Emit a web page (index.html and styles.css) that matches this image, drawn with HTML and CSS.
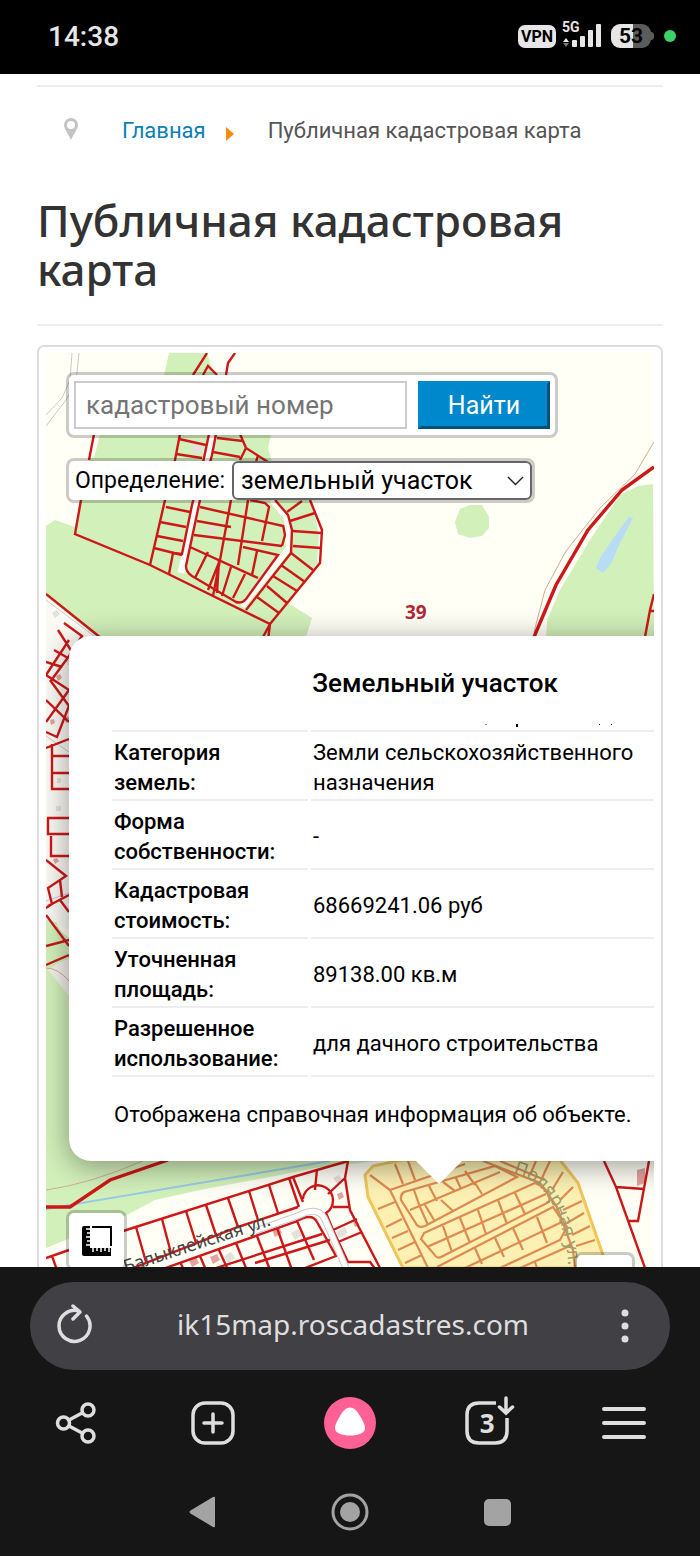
FILE: index.html
```
<!DOCTYPE html>
<html lang="ru">
<head>
    <meta charset="UTF-8">
    <meta name="viewport" content="width=device-width, initial-scale=1.0">
    <title>Публичная кадастровая карта</title>
    <link rel="stylesheet" href="styles.css">
</head>
<body>
    <header class="status">
        <span class="clock">14:38</span>
        <div class="status-icons">
            <span class="vpn">VPN</span>
            <div class="signal">
                <span class="net">5G</span>
                <svg width="40" height="24" viewBox="0 0 40 24" fill="#e6e6e6">
                    <path d="M1 18l3-4 3 4z"/>
                    <path d="M1 19h6l-3 4z" fill="#777"/>
                    <rect x="10" y="16" width="5" height="7" rx="1"/>
                    <rect x="18" y="12" width="5" height="11" rx="1"/>
                    <rect x="26" y="6" width="5" height="17" rx="1"/>
                    <rect x="34" y="0" width="5" height="23" rx="1"/>
                </svg>
            </div>
            <span class="battery">53</span>
            <span class="dot"></span>
        </div>
    </header>

    <main class="page">
        <nav class="breadcrumb">
            <svg class="pin" width="14" height="22" viewBox="0 0 14 22"><path fill="#c4c4c4" fill-rule="evenodd" d="M7 0a7 7 0 0 1 7 7c0 4-4 8-7 15C4 15 0 11 0 7a7 7 0 0 1 7-7zm0 3a4 4 0 1 0 0 8 4 4 0 0 0 0-8z"/></svg>
            <a href="#">Главная</a>
            <svg class="arrow" width="8" height="14" viewBox="0 0 8 14"><path fill="#f98b0c" d="M0 0l8 7-8 7z"/></svg>
            <span>Публичная кадастровая карта</span>
        </nav>
        <h1>Публичная кадастровая карта</h1>

        <div class="map-panel">
            <div class="map">
                <svg class="map-tiles" viewBox="46 353 608 914" preserveAspectRatio="xMinYMin slice">
                    <rect x="46" y="353" width="608" height="914" fill="#fffff6"/>
                    <!-- леса -->
                    <g fill="#d2f0ba">
                        <path d="M169 353H207L213 372 252 400 271 434 268 448 272 462 262 470 310 500 322 530 320 563 288 603 312 618 305 640H100L46 596V526L55 520 75 527 96 434 163 380z"/>
                        <path d="M653 484L638 486 620 495 590 540 560 590 547 620 546 640H654z"/>
                        <path d="M460 509L470 505H482L489 517V528L482 536 470 538 458 534 455 522z"/>
                        <path d="M46 920L72 940V1100H375V1161L315 1168 270 1177 200 1190 155 1200 125 1216 46 1248z"/>
                    </g>
                    <path d="M629 517l4 1-14 27-7 17-9 11-7-5 4-10 15-22z" fill="#b8dcf5"/>
                    <!-- дороги -->
                    <g fill="none" stroke="#fffdf8">
                        <path stroke-width="7" d="M213 430L208 460 192 525 181 573"/>
                        <path stroke-width="6" d="M272 500L287 518 289 548 242 606"/>
                        <path stroke-width="9" d="M46 606L100 648"/>
                        <path stroke-width="4" d="M311 498L318 520 321 535 319 562M98 434L92 458"/>
                    </g>
                    <path d="M46 600L90 640 72 660V930L46 920z" fill="#fbf9f3"/>
                    <path d="M46 920L56 922 69 946V965L46 975z" fill="#d2f0ba"/>
                    <path d="M48 970L60 962 72 958V1000z" fill="#f3efe9"/>
                    <g fill="none" stroke="#c9c9cf" stroke-width="1">
                        <path d="M72 353L70 380 62 398 46 415M79 353L76 382 66 400 46 426M46 600L94 636M46 736L69 752M46 901L69 893"/>
                    </g>
                    <g fill="none" stroke="#d0ac94" stroke-width="1">
                        <path d="M534 632L545 590 566 551 600 508 635 474 654 442M46 1190Q90 1184 145 1160M46 968Q58 968 69 981"/>
                    </g>
                    <path d="M46 1209L330 1161" stroke="#98cbe6" stroke-width="2" fill="none"/>
                    <g fill="#e4e0da">
                        <path d="M190 447l8-3 6 4-2 5-9 0zM206 528l9-2 2 5-8 3zM52 613l5-3 3 4-5 4zM67 660h5v5h-5zM56 806h5v5h-5zM57 778h4v5h-4zM333 1178l6-3 4 6-5 4zM336 1232l9-5 3 6-9 5zM291 1233l7-4 4 6-7 5zM224 1256l7-4 4 6-7 5z"/>
                    </g>
                    <g fill="#dc8c8c" opacity=".8">
                        <path d="M337 1194l5-2 2 5-5 3zM272 1230l7-3 3 6-7 4zM210 1257l7-3 3 6-7 4zM189 1260l7-3 3 6-7 4zM637 1170l8-2v15l-8 3zM56 676l4-2 2 4-4 3zM64 718l4-2 2 4-4 3zM353 1222l4-2 2 5-4 2zM50 720l4-1 1 4-4 2zM53 859l4-1 2 3-4 3z"/>
                    </g>
                    <!-- границы участков -->
                    <g class="parcels">
                        <path d="M94 434L89 460M81 500L75 534 150 565 270 624 320 563 322 530 310 500M270 624L263 637M270 624L268 640"/>
                        <path d="M193 375L207 353M203 375L208 366 217 375M226 375L228 363 235 353"/>
                        <path d="M180 434L175 460 165 500 150 565M209 434L204 458 192 505 182 554 173 553 169 574"/>
                        <path d="M179 439L206 445M176 454L202 458M166 507L190 512M160 522L186 527M157 536L183 541M154 548L182 555"/>
                        <path d="M216 434L212 455 200 500 186 566Q186 572 192 576L236 602Q242 604 246 599L278 555 243 547"/>
                        <path d="M217 438L243 441M213 452L240 457M200 507L283 526M197 521L231 527M194 535L282 546M190 547L258 578"/>
                        <path d="M231 500L220 560 213 596M248 500L238 565M250 500L265 503 269 507 262 541M283 525L285 535 282 546M208 552L195 578M220 560L208 590M219 560L217 593M231 567L222 596M245 574L233 598M257 551L252 575"/>
                        <path d="M240 434L246 448 268 462M246 448L240 460M258 455L256 462M275 500L288 515 292 530 291 553 246 610"/>
                        <path d="M287 512L302 501M290 521L315 513M293 531L321 533M293 546L321 548M291 553L313 570M281 565L305 582M267 586L287 603M273 576L297 591M257 597L279 613"/>
                        <path d="M46 594L101 638M69 640L46 675M72 652L50 682M64 623L82 636 72 652 58 630M54 650L68 658M46 662L62 667M46 675L69 690 46 722M50 680L69 706 57 737 46 732M46 700L69 722M46 748L69 739M52 744V789H69M52 756H69M52 773H69M47 818H69M48 818V834H69M51 836V856H69M46 860L66 876 48 888 52 904 46 908M60 880L62 897M48 906L69 895M46 915L69 946M60 900L69 912M46 946L69 940M46 965L69 955"/>
                        <path class="wide" d="M534 637L556 585 588 530 622 490 654 467M46 1207H70L110 1180 168 1160"/>
                        <path d="M645 637L650 610 654 594M649 611H654"/>
                        <!-- нижний квартал -->
                        <path d="M46 1258L69 1250M52 1256L57 1270M120 1232L293 1177 348 1161M128 1270L238 1227 298 1207M293 1177L303 1202M289 1178L299 1207"/>
                        <path d="M136 1227L146 1262M162 1219L171 1253M186 1211L196 1243M206 1205L216 1235M228 1198L238 1227M249 1191L258 1220M269 1185L278 1213"/>
                        <path d="M303 1199A15 15 0 1 1 326 1213L333 1230 348 1262H370L376 1270M317 1169L315 1190M345 1178L328 1194M348 1161L345 1178 350 1210 381 1270M333 1207H350M333 1230L357 1219M338 1242L362 1232"/>
                        <path d="M160 1270L295 1222Q312 1212 317 1222L336 1256 300 1270M210 1270L322 1234M180 1262L184 1270M200 1256L206 1270M219 1250L228 1270M236 1243L246 1268M257 1236L270 1270M277 1228L292 1270M297 1221L314 1260M255 1263L330 1240"/>
                        <path d="M604 1161L616 1187 645 1268M649 1161L638 1221H629M616 1187L644 1189"/>
                    </g>
                    <g fill="none">
                        <path d="M255 1231L300 1215Q320 1205 326 1222L346 1268" stroke="#c9c9cf" stroke-width="7"/>
                        <path d="M255 1231L300 1215Q320 1205 326 1222L346 1268" stroke="#fff" stroke-width="5"/>
                    </g>
                    <!-- выделенный участок -->
                    <path d="M402 1160L373 1166 365 1175 368 1197 403 1268H606L603 1255 578 1183 560 1160z" fill="#fcf0b2" stroke="#f0c65c" stroke-width="3"/>
                    <g class="selected">
                        <path d="M370 1175L390 1190 428 1268M378 1209L395 1202M386 1227L402 1219M392 1238L408 1231M398 1250L415 1242M405 1263L422 1255M390 1190L465 1164M395 1164L403 1184M408 1161L415 1180"/>
                        <path d="M404 1192L495 1166 517 1177 425 1226Q418 1229 415 1222L401 1200Q400 1195 404 1192zM410 1210L500 1172M414 1190L420 1207 428 1225M429 1186L437 1201M441 1200L453 1211M443 1182L455 1191M456 1178L461 1189M475 1183L482 1194M465 1171L475 1185M425 1205L434 1220"/>
                        <path d="M424 1233L535 1183Q552 1190 549 1202L443 1256Q437 1260 434 1254L421 1239zM427 1247L546 1194M443 1226L452 1252M460 1218L470 1243M478 1210L486 1234M498 1200L507 1224M515 1193L525 1214"/>
                        <path d="M437 1267L553 1207 567 1227 560 1240 500 1268M465 1268L562 1222M475 1248L482 1264M495 1238L504 1257M513 1228L523 1250M537 1217L547 1243M520 1268L572 1245M535 1262L537 1268"/>
                        <path d="M483 1161L540 1183 557 1207 573 1250 575 1268M500 1161L545 1180M536 1161L530 1175M550 1161L541 1180M563 1172L552 1190M573 1187L560 1200M582 1201L563 1210M584 1213L567 1223M590 1226L572 1235M595 1240L576 1246"/>
                    </g>
                    <path id="balyk" d="M126 1273Q180 1255 272 1225" fill="none"/>
                    <path id="polar" d="M513 1173Q562 1184 569 1270" fill="none"/>
                    <text class="street"><textPath href="#balyk">Балыклейская ул.</textPath></text>
                    <text class="street street-green"><textPath href="#polar">Полярная ул.</textPath></text>
                    <text class="quarter" x="405" y="619">39</text>
                </svg>

                <div class="map-controls">
                    <form class="search">
                        <input type="text" placeholder="кадастровый номер" aria-label="кадастровый номер">
                        <button type="button">Найти</button>
                    </form>
                    <div class="kind">
                        <label for="kind">Определение:</label>
                        <div class="select-wrap">
                            <select id="kind">
                                <option>земельный участок</option>
                            </select>
                            <svg width="17" height="10" viewBox="0 0 17 10" fill="none" stroke="#222" stroke-width="1.4"><path d="M1 1l7.500 7.500L16 1"/></svg>
                        </div>
                    </div>
                </div>

                <div class="map-tools">
                    <button type="button" class="tool tool-measure" aria-label="Измерить">
                        <svg width="32" height="32" viewBox="0 0 32 32">
                            <path d="M3 1h6v22h21v8H3q-2 0-2-2V3q0-2 2-2z"/>
                            <path d="M11 2h19v19" fill="none" stroke="#000" stroke-width="2"/>
                            <path d="M9 4H5M9 8H6M9 12H5M9 16H6M9 20H5M12 23v4M16 23v3M20 23v4M24 23v3M28 23v4" stroke="#fff" stroke-width="1.500"/>
                        </svg>
                    </button>
                    <button type="button" class="tool" aria-label="Слои"></button>
                </div>

                <section class="popup">
                    <h2>Земельный участок</h2>
                    <table>
                        <tr class="cut">
                            <td></td>
                            <td><svg width="342" height="6" viewBox="311 724 342 6"><path d="M485 724h2l-1 1zM516 724h2v3h-2zM599 724h1v1h-1zM611 724h1v1h-1z"/></svg></td>
                        </tr>
                        <tr><th scope="row">Категория земель:</th><td>Земли сельскохозяйственного<br>назначения</td></tr>
                        <tr><th scope="row">Форма собственности:</th><td>-</td></tr>
                        <tr><th scope="row">Кадастровая стоимость:</th><td>68669241.06 руб</td></tr>
                        <tr><th scope="row">Уточненная площадь:</th><td>89138.00 кв.м</td></tr>
                        <tr><th scope="row">Разрешенное использование:</th><td>для дачного строительства</td></tr>
                    </table>
                    <p>Отображена справочная информация об объекте.</p>
                </section>
            </div>
        </div>
    </main>

    <footer class="browser">
        <div class="address">
            <button type="button" aria-label="Обновить">
                <svg width="40" height="44" viewBox="0 0 40 44" fill="none" stroke="#dedede" stroke-width="3.500" stroke-linecap="round" stroke-linejoin="round"><path d="M24 7A15.500 15.500 0 1 0 31.500 12M18 2l7 6-7 7"/></svg>
            </button>
            <span>ik15map.roscadastres.com</span>
            <button type="button" aria-label="Ещё">
                <svg width="40" height="44" viewBox="0 0 40 44" fill="#dedede"><circle cx="20" cy="9" r="3.500"/><circle cx="20" cy="22" r="3.500"/><circle cx="20" cy="35" r="3.500"/></svg>
            </button>
        </div>
        <div class="toolbar">
            <button type="button" aria-label="Поделиться">
                <svg width="56" height="56" viewBox="0 0 56 56" fill="none" stroke="#dedede" stroke-width="3.500"><circle cx="15.500" cy="28" r="6"/><circle cx="40" cy="15" r="6"/><circle cx="40" cy="41" r="6"/><path d="M21 25l14-7.500M21 31l14 7.500"/></svg>
            </button>
            <button type="button" aria-label="Новая вкладка">
                <svg width="56" height="56" viewBox="0 0 56 56" fill="none" stroke="#dedede" stroke-width="3.500" stroke-linecap="round"><rect x="8" y="8" width="40" height="40" rx="12"/><path d="M28 19v18M19 28h18"/></svg>
            </button>
            <button type="button" aria-label="Алиса">
                <svg width="56" height="56" viewBox="0 0 56 56"><circle cx="28" cy="28" r="26" fill="#ff6095"/><path fill="#fff" d="M28 12.500c4 0 7 3.500 10 8.500 3 5 5 9 5 12 0 5.500-7 7.500-15 7.500S13 38.500 13 33c0-3 2-7 5-12 3-5 6-8.500 10-8.500z"/></svg>
            </button>
            <button type="button" class="tabs" aria-label="Вкладки">
                <svg width="56" height="56" viewBox="0 0 56 56" fill="none" stroke="#dedede" stroke-width="3.500"><path d="M37 8H20Q8 8 8 20V36Q8 48 20 48H36Q48 48 48 36V23"/><path d="M47 3v14M40.500 12l6.500 6 6.500-6" stroke-linecap="round"/></svg>
                <span>3</span>
            </button>
            <button type="button" aria-label="Меню">
                <svg width="56" height="56" viewBox="0 0 56 56" stroke="#dedede" stroke-width="4" stroke-linecap="round"><path d="M8 14h40M8 28h40M8 42h40"/></svg>
            </button>
        </div>
        <div class="system-nav">
            <svg width="40" height="40" viewBox="0 0 40 40" fill="#a3a3a3"><path d="M7.500 18.500L30 5q2-1 2 1v28q0 2-2 1L7.500 21.500q-2-1.500 0-3z"/></svg>
            <svg width="40" height="40" viewBox="0 0 40 40" fill="#a3a3a3"><circle cx="20" cy="20" r="10"/><circle cx="20" cy="20" r="17" fill="none" stroke="#a3a3a3" stroke-width="3"/></svg>
            <svg width="40" height="40" viewBox="0 0 40 40" fill="#a3a3a3"><rect x="7" y="7" width="27" height="27" rx="5"/></svg>
        </div>
    </footer>
</body>
</html>
```
FILE: styles.css
```
* {
    box-sizing: border-box;
}
body {
    margin: 0;
    height: 100vh;
    display: flex;
    flex-direction: column;
    background: #fff;
    color: #000;
    font-family: Roboto, sans-serif;
    font-size: 22px;
    line-height: 30px;
}
button {
    padding: 0;
    border: none;
    background: none;
    font-family: inherit;
    cursor: pointer;
}
svg {
    display: block;
    flex: none;
}

/* статус-бар */
.status {
    display: flex;
    justify-content: space-between;
    align-items: center;
    height: 74px;
    padding: 0 24px 0 48px;
    background: #000;
    color: #e6e6e6;
}
.clock {
    font-size: 28px;
    font-weight: 500;
}
.status-icons {
    display: flex;
    align-items: center;
    gap: 6px;
    padding-bottom: 2px;
}
.vpn {
    width: 38px;
    border-radius: 7px;
    background: #e6e6e6;
    color: #000;
    font-size: 16px;
    font-weight: 700;
    line-height: 23px;
    text-align: center;
}
.signal {
    position: relative;
}
.net {
    position: absolute;
    left: 0;
    top: -4px;
    font-size: 14px;
    font-weight: 700;
    line-height: 14px;
}
.battery {
    position: relative;
    width: 40px;
    margin: 0 7px 0 3px;
    border-radius: 9px;
    background: linear-gradient(90deg, #e6e6e6 55%, #5c5c5c 55%);
    color: #000;
    font-size: 21px;
    font-weight: 700;
    line-height: 24px;
    text-align: center;
}
.battery::after {
    content: "";
    position: absolute;
    left: 100%;
    top: 8px;
    width: 3px;
    height: 8px;
    border-radius: 0 3px 3px 0;
    background: #5c5c5c;
}
.dot {
    width: 12px;
    height: 12px;
    border-radius: 50%;
    background: #3bd367;
}

/* страница */
.page {
    flex: 1;
    min-height: 0;
    display: flex;
    flex-direction: column;
    padding: 11px 37px 0;
    overflow: hidden;
}
.breadcrumb {
    display: flex;
    align-items: center;
    padding: 29px 27px;
    border-top: 2px solid #eee;
    color: #555;
}
.pin {
    margin-bottom: 4px;
}
.breadcrumb a {
    margin: 0 20px 0 44px;
    color: #0b7fb8;
    text-decoration: none;
}
.arrow {
    margin: 6px 34px 0 0;
}
h1 {
    margin: 21px 0 19px;
    padding-bottom: 30px;
    border-bottom: 2px solid #eee;
    color: #333;
    font-family: "Noto Sans", sans-serif;
    font-size: 44px;
    font-weight: 500;
    line-height: 49px;
}
.map-panel {
    flex: 1;
    min-height: 0;
    display: flex;
    padding: 6px 7px 0;
    border: 2px solid #ddd;
    border-bottom: none;
    border-radius: 7px 7px 0 0;
}
.map {
    position: relative;
    flex: 1;
    overflow: hidden;
}
.map-tiles {
    position: absolute;
    left: 0;
    top: 0;
    width: 100%;
    height: 100%;
}
.parcels {
    fill: none;
    stroke: #cc1818;
    stroke-width: 2.4;
}
.parcels .wide {
    stroke-width: 3.4;
}
.selected {
    fill: none;
    stroke: #df8a50;
    stroke-width: 2.2;
}
.street {
    fill: #444;
    font-family: "Noto Sans", sans-serif;
    font-size: 18px;
}
.street-green {
    fill: #9aa070;
}
.quarter {
    fill: #b02a35;
    font-family: "Noto Sans", sans-serif;
    font-size: 19px;
    font-weight: 700;
}

/* элементы управления картой */
.map-controls {
    position: absolute;
    left: 20px;
    top: 19px;
    display: flex;
    flex-direction: column;
    align-items: flex-start;
    gap: 20px;
}
.search,
.kind,
.tool {
    border: 3px solid rgba(0, 0, 0, 0.2);
    border-radius: 8px;
    background: #fff;
    background-clip: padding-box;
}
.search {
    display: flex;
    gap: 11px;
    padding: 6px 5px;
}
.search input {
    width: 333px;
    height: 48px;
    padding: 0 10px;
    border: 2px solid #ccc;
    border-radius: 0;
    font-family: inherit;
    font-size: 26px;
}
.search input::placeholder {
    color: #757575;
}
.search button {
    width: 132px;
    border: 3px outset #08c;
    background: #08c;
    color: #fff;
    font-size: 25px;
}
.kind {
    display: flex;
    align-items: center;
    padding-left: 6px;
}
.kind label {
    width: 157px;
    font-size: 23px;
}
.select-wrap {
    position: relative;
}
.select-wrap svg {
    position: absolute;
    right: 8px;
    top: 15px;
    pointer-events: none;
}
.kind select {
    display: block;
    width: 300px;
    height: 39px;
    padding: 0 7px;
    border: 2px solid #666;
    border-radius: 6px;
    background: #fff;
    color: #000;
    font-family: inherit;
    font-size: 25px;
    appearance: none;
}
.map-tools {
    position: absolute;
    left: 20px;
    right: 19px;
    bottom: -46px;
    display: flex;
    justify-content: space-between;
    align-items: flex-end;
}
.tool {
    display: flex;
    align-items: center;
    justify-content: center;
    width: 61px;
    height: 61px;
}
.tool-measure {
    margin-bottom: 42px;
}

/* карточка участка */
.popup {
    position: absolute;
    left: 23px;
    top: 283px;
    width: 740px;
    height: 525px;
    padding: 32px 43px 0;
    border-radius: 22px;
    background: #fff;
    box-shadow: 0 5px 30px rgba(0, 0, 0, 0.4);
}
.popup::after {
    content: "";
    position: absolute;
    left: 347px;
    top: 100%;
    border: 23px solid transparent;
    border-top-color: #fff;
    border-bottom: none;
}
h2 {
    margin: 0 0 25px;
    padding-right: 8px;
    font-size: 26px;
    font-weight: 500;
    line-height: 30px;
    text-align: center;
}
table {
    width: 100%;
    border-spacing: 3px 1px;
    margin-left: -3px;
}
th,
td {
    padding: 5px 2px 1px;
    border-bottom: 2px solid #eee;
    text-align: left;
    vertical-align: middle;
}
th {
    width: 196px;
    padding-right: 12px;
    font-weight: 500;
}
.cut td {
    padding: 0;
}
.popup p {
    margin: 22px 2px;
}

/* панель браузера */
.browser {
    padding: 15px 0 8px;
    background: #161616;
    color: #dedede;
}
.address {
    display: flex;
    align-items: center;
    justify-content: space-between;
    height: 88px;
    margin: 0 30px;
    padding: 0 25px;
    border-radius: 44px;
    background: #414045;
    font-family: "Noto Sans", sans-serif;
    font-size: 28px;
}
.address span {
    padding: 0 0 4px 6px;
}
.toolbar {
    display: grid;
    grid-template-columns: repeat(5, 1fr);
    justify-items: center;
    align-items: center;
    height: 106px;
    padding: 0 7px;
}
.tabs {
    position: relative;
}
.tabs span {
    position: absolute;
    inset: 0;
    color: #dedede;
    font-family: "Noto Sans", sans-serif;
    font-size: 26px;
    font-weight: 700;
    line-height: 56px;
}
.system-nav {
    display: flex;
    align-items: center;
    justify-content: center;
    gap: 107px;
    height: 72px;
}
```
